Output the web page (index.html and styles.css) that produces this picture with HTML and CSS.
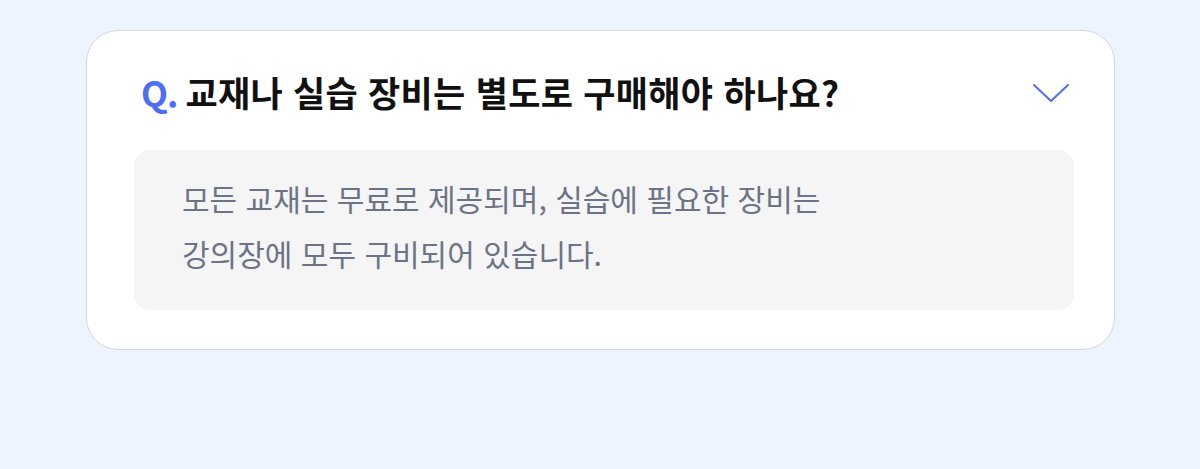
FILE: index.html
```html
<!DOCTYPE html>
<html lang="ko">
<head>
<meta charset="utf-8">
<link rel="stylesheet" href="styles.css">
</head>
<body>
<main class="page">
  <section class="faq-card">
    <div class="faq-question">
      <h2 class="question-text"><span class="q-mark">Q.</span>교재나 실습 장비는 별도로 구매해야 하나요?</h2>
      <svg class="chevron" width="38" height="22" viewBox="0 0 38 22" aria-hidden="true">
        <polyline points="2,3 19,19 36,3" fill="none" stroke="#4d6ef5" stroke-width="2" stroke-linecap="round" stroke-linejoin="round"/>
      </svg>
    </div>
    <div class="faq-answer">
      <p>모든 교재는 무료로 제공되며, 실습에 필요한 장비는<br>강의장에 모두 구비되어 있습니다.</p>
    </div>
  </section>
</main>
</body>
</html>
```

FILE: styles.css
```css
* { box-sizing: border-box; }
html, body {
  margin: 0;
  padding: 0;
  background: #eef4fe;
  font-family: "Noto Sans CJK KR", "Noto Sans", sans-serif;
}
.page {
  width: 1200px;
  height: 469px;
  padding: 30px 86px 0 86px;
}
.faq-card {
  width: 1029px;
  height: 320px;
  background: #ffffff;
  border: 1px solid #d3d6dc;
  border-radius: 32px;
  padding: 39px 40px 37px 47px;
  display: flex;
  flex-direction: column;
  gap: 32px;
}
.faq-question {
  display: flex;
  align-items: center;
  justify-content: space-between;
  height: 48px;
}
.question-text {
  margin: -5px 0 0 7px;
  font-size: 35px;
  font-weight: 700;
  color: #111111;
  letter-spacing: 0.3px;
  line-height: 48px;
}
.q-mark {
  color: #4d6ef5;
  letter-spacing: -1px;
  margin-right: 8px;
}
.chevron {
  margin-right: 4px;
  margin-top: -2px;
}
.faq-answer {
  background: #f5f5f5;
  border-radius: 16px;
  height: 160px;
  padding: 21px 48px;
}
.faq-answer p {
  margin: 0;
  font-size: 30px;
  line-height: 55px;
  color: #6b7486;
  letter-spacing: 0;
}
```
